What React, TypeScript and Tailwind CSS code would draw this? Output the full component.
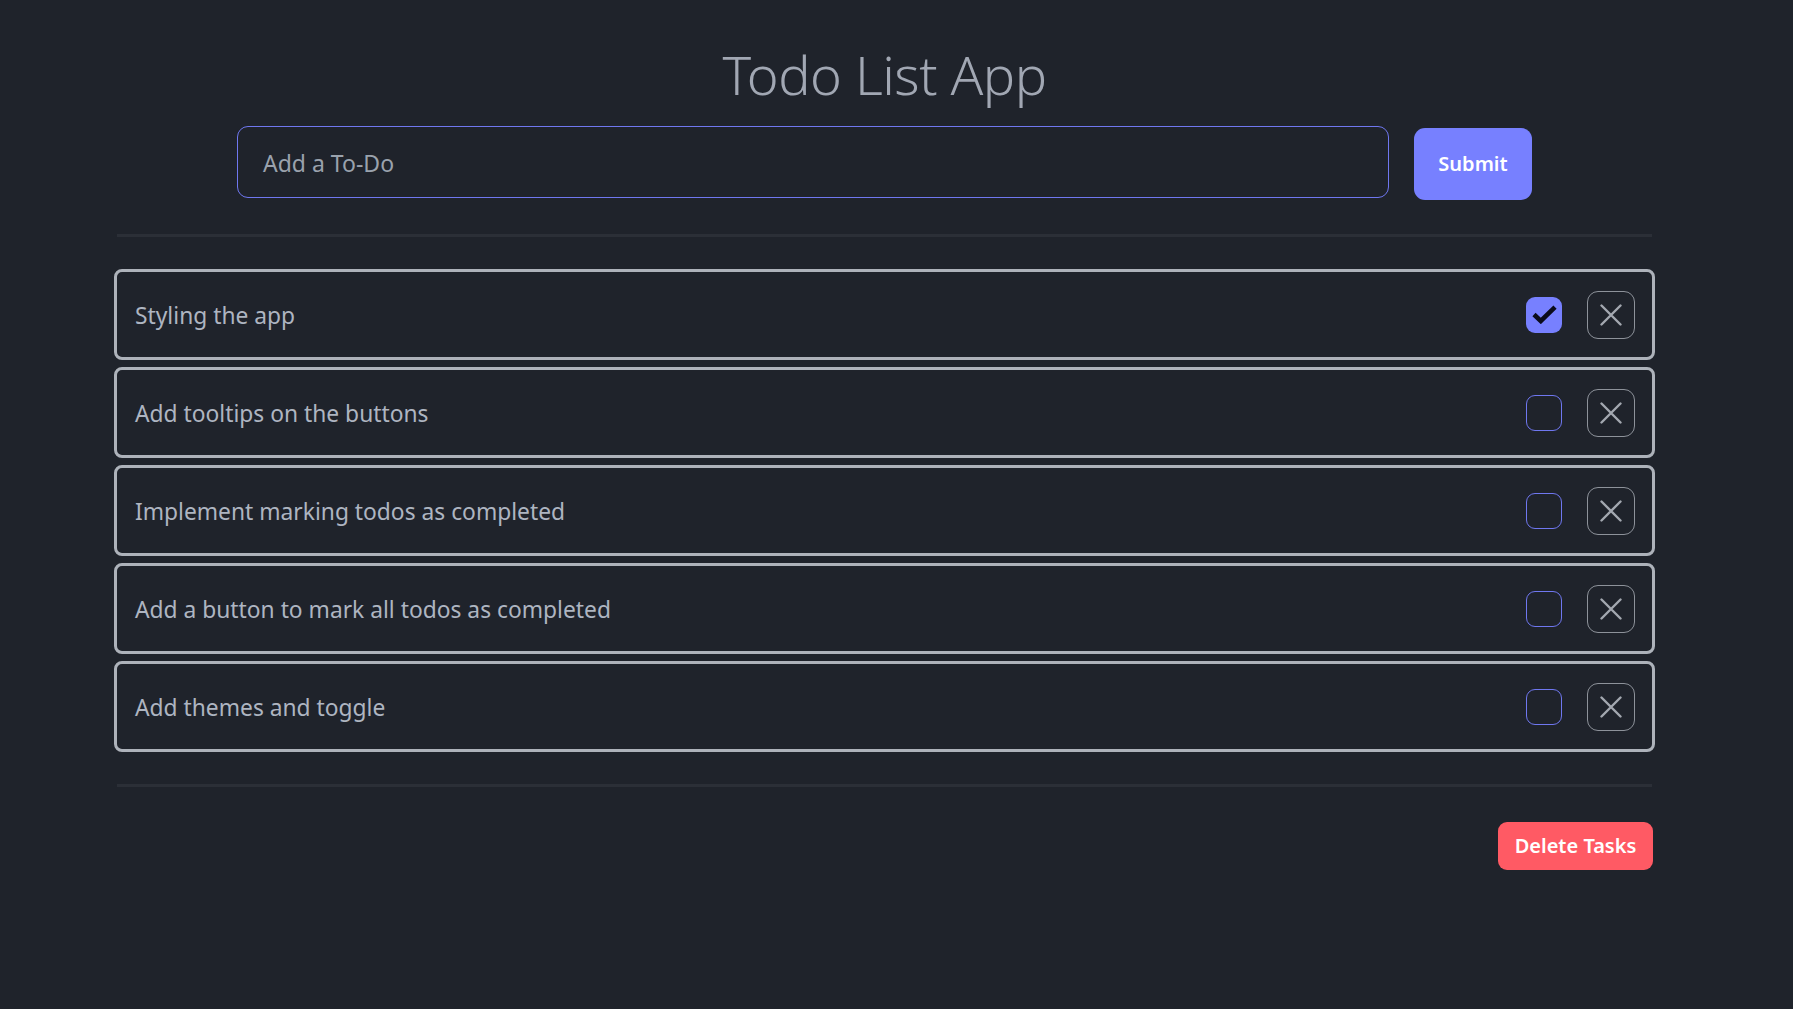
import React from "react";

const todos = [
  { text: "Styling the app", done: true },
  { text: "Add tooltips on the buttons", done: false },
  { text: "Implement marking todos as completed", done: false },
  { text: "Add a button to mark all todos as completed", done: false },
  { text: "Add themes and toggle", done: false },
];

function XIcon() {
  return (
    <svg width="22" height="22" viewBox="0 0 22 22" fill="none">
      <path d="M1.5 1.5 L20.5 20.5 M20.5 1.5 L1.5 20.5" stroke="#a3a8b0" strokeWidth="2.4" strokeLinecap="round" />
    </svg>
  );
}

function CheckIcon() {
  return (
    <svg width="25" height="19" viewBox="0 0 25 19" fill="none">
      <path d="M2 9.5 L8.8 16 L23 2.2" stroke="#0b0b1c" strokeWidth="4.6" strokeLinecap="butt" strokeLinejoin="miter" />
    </svg>
  );
}

export default function App() {
  return (
    <div className="min-h-[1009px] w-full bg-[#1f232b] font-['Noto_Sans',sans-serif]">
      <div className="ml-[114px] w-[1541px] flex flex-col">
        <h1 className="mt-[38px] text-center text-[54px] leading-[72px] font-light text-[#a1a7b3] tracking-[-0.5px]">
          Todo List App
        </h1>
        <div className="mt-[16px] h-[72px] flex justify-center gap-[25px]">
          <div className="w-[1152px] h-[72px] rounded-[11px] border border-[#6f77f0] flex items-center px-[25px]">
            <span className="pt-[2px] text-[23px] text-[#9aa2ad]">Add a To-Do</span>
          </div>
          <button className="mt-[2px] w-[118px] h-[72px] rounded-[11px] bg-[#7780ff] text-white text-[20px] font-semibold">
            Submit
          </button>
        </div>
        <div className="mt-[36px] mx-[3px] h-[3px] bg-[#2b2f37]" />
        <div className="mt-[32px] flex flex-col gap-[7px]">
          {todos.map((t) => (
            <div
              key={t.text}
              className="h-[91px] rounded-[8px] border-[3px] border-[#adb2ba] flex items-center pl-[18px] pr-[17px]"
            >
              <span className="flex-1 pt-[4px] text-[22.8px] text-[#aeb5c1]">{t.text}</span>
              {t.done ? (
                <div className="w-[36px] h-[36px] rounded-[9px] bg-[#7780ff] flex items-center justify-center">
                  <CheckIcon />
                </div>
              ) : (
                <div className="w-[36px] h-[36px] rounded-[9px] border border-[#6f77f0]" />
              )}
              <div className="ml-[25px] w-[48px] h-[48px] rounded-[11px] border border-[#8d929a] flex items-center justify-center">
                <XIcon />
              </div>
            </div>
          ))}
        </div>
        <div className="mt-[32px] mx-[3px] h-[3px] bg-[#2b2f37]" />
        <div className="mt-[35px] flex justify-end pr-[2px]">
          <button className="w-[155px] h-[48px] rounded-[9px] bg-[#ff5a64] text-white text-[20px] font-semibold">
            Delete Tasks
          </button>
        </div>
      </div>
    </div>
  );
}
